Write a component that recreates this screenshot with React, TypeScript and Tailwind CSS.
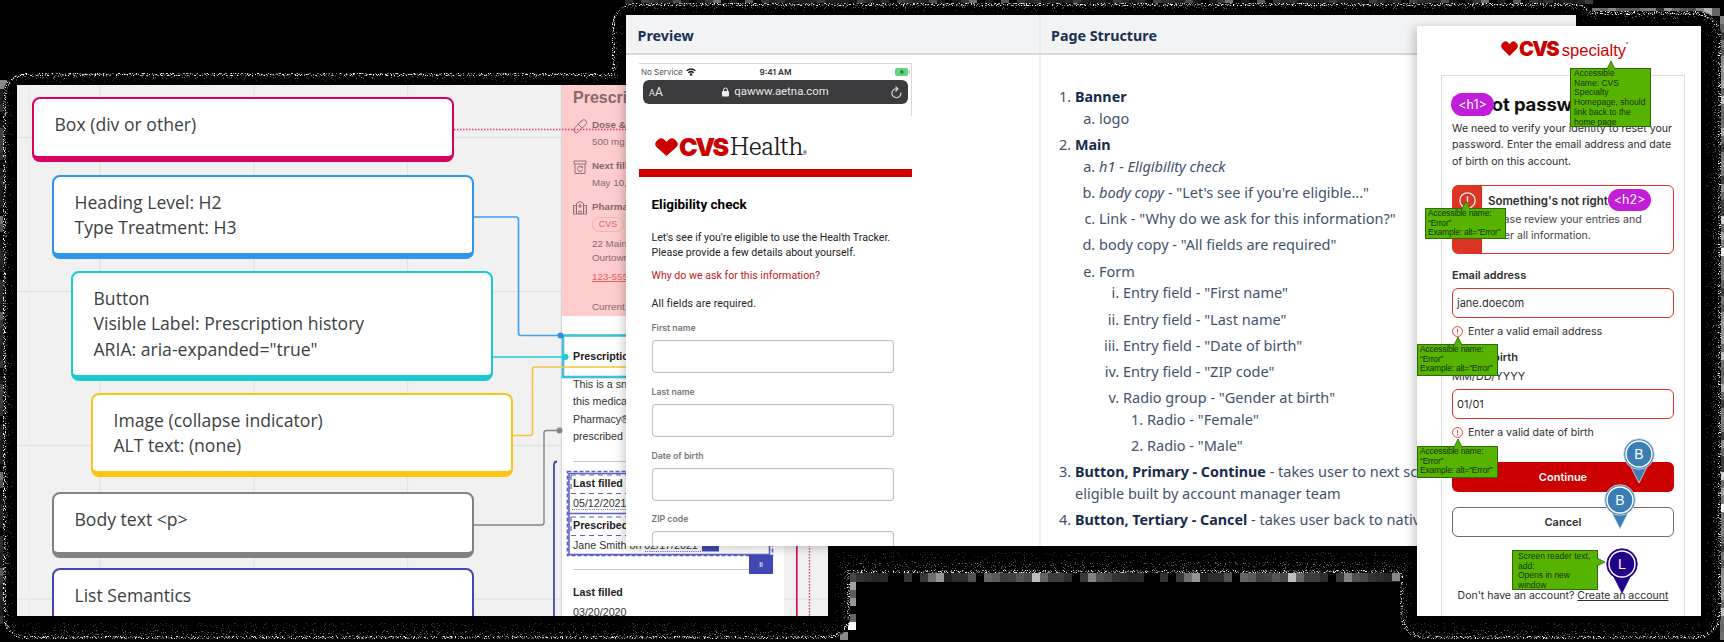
import React from "react";

type Tile = { x: number; y: number; w: number; h: number; v: number };

const pattern = [70, 50, 45, 38, 40, 0, 0, 50, 0, 55, 110, 150, 30, 45, 45, 80, 0, 100, 90, 60, 65, 85, 70, 190, 100, 60, 60, 45, 0, 55, 130, 80];

const tiles: Tile[] = [];
for (let i = 0; i < 69; i++) tiles.push({ x: 848 + i * 8, y: 573, w: 8, h: 9, v: pattern[i % 32] });
for (let i = 0; i < 121; i++) tiles.push({ x: 625 + i * 8, y: 0, w: 8, h: 4, v: pattern[(i * 5) % 32] * 0.6 });
for (let i = 0; i < 69; i++) tiles.push({ x: 0, y: 80 + i * 8, w: 3, h: 8, v: pattern[(i * 7) % 32] * 0.6 });
for (let i = 0; i < 78; i++) tiles.push({ x: 1720, y: 16 + i * 8, w: 4, h: 8, v: 60 + pattern[(i * 3) % 32] });
for (let i = 0; i < 16; i++) tiles.push({ x: 1592 + i * 8, y: 8, w: 8, h: 8, v: 50 + pattern[(i * 9) % 32] });
[160, 95, 150, 0, 100, 255].forEach((v, i) => tiles.push({ x: 848, y: 582 + i * 8, w: 8, h: 8, v }));
tiles.push({ x: 0, y: 80, w: 7, h: 9, v: 136 }, { x: 1392, y: 573, w: 8, h: 8, v: 136 }, { x: 840, y: 632, w: 8, h: 8, v: 140 });

function Backdrop() {
  return (
    <svg className="absolute inset-0" width="1724" height="642" aria-hidden="true">
      <defs>
        <filter id="grain" x="0" y="0" width="1724" height="642" filterUnits="userSpaceOnUse" colorInterpolationFilters="sRGB">
          <feTurbulence type="fractalNoise" baseFrequency="0.9" numOctaves="2" seed="7" result="n" />
          <feColorMatrix in="n" type="matrix" values="2.4 0 0 0 -0.7  2.4 0 0 0 -0.7  2.4 0 0 0 -0.7  0 0 0 0 1" result="g" />
          <feComposite in="g" in2="SourceGraphic" operator="arithmetic" k1="0" k2="2.2" k3="2.4" k4="-2.45" />
          <feColorMatrix type="matrix" values="1 0 0 0 0  0 1 0 0 0  0 0 1 0 0  0 0 0 0 1" />
        </filter>
        <clipPath id="outer">
          <rect x="3" y="73" width="847" height="566" rx="22" />
          <rect x="612" y="3" width="983" height="570" rx="22" />
          <rect x="1400" y="11" width="321" height="628" rx="24" />
        </clipPath>
      </defs>
      <rect width="1724" height="642" fill="#000" />
      {tiles.map((t, i) => (
        <rect key={i} x={t.x} y={t.y} width={t.w} height={t.h} fill={`rgb(${t.v},${t.v},${t.v})`} />
      ))}
      <g clipPath="url(#outer)">
        <g filter="url(#grain)">
          <rect width="1724" height="642" fill="#000" />
          <rect x="3" y="73" width="847" height="566" rx="22" fill="#8c8c8c" />
          <rect x="612" y="3" width="983" height="570" rx="20" fill="#8c8c8c" />
          <rect x="1400" y="11" width="321" height="628" rx="24" fill="#8c8c8c" />
          <rect x="6" y="76" width="841" height="560" rx="20" fill="#444" />
          <rect x="615" y="6" width="977" height="564" rx="18" fill="#444" />
          <rect x="1403" y="15" width="315" height="621" rx="22" fill="#444" />
          <rect x="9" y="79" width="835" height="551" rx="14" fill="#303030" />
          <rect x="618" y="9" width="969" height="553" rx="12" fill="#303030" />
          <rect x="1407" y="19" width="306" height="611" rx="14" fill="#303030" />
          <rect x="13" y="82" width="822" height="541" rx="6" fill="#101010" />
          <rect x="622" y="12" width="960" height="540" rx="6" fill="#101010" />
          <rect x="1412" y="23" width="294" height="600" rx="6" fill="#101010" />
        </g>
      </g>
    </svg>
  );
}

const cards = [
  { cls: "ml-[15px] mt-[12px] h-[65px] border-[#d9005f]", lines: ["Box (div or other)"] },
  { cls: "ml-[35px] mt-[13px] h-[84px] border-[#2f96ea]", lines: ["Heading Level: H2", "Type Treatment: H3"] },
  { cls: "ml-[54px] mt-[12px] h-[110px] border-[#18cbd2]", lines: ["Button", "Visible Label: Prescription history", "ARIA: aria-expanded=\"true\""] },
  { cls: "ml-[74px] mt-[12px] h-[84px] border-[#f8c512]", lines: ["Image (collapse indicator)", "ALT text: (none)"] },
  { cls: "ml-[35px] mt-[15px] h-[66px] border-[#828282]", lines: ["Body text <p>"] },
  { cls: "ml-[35px] mt-[10px] h-[66px] border-[#4148b5]", lines: ["List Semantics"] },
];

function PrescriptionPanel() {
  return (
    <div className="absolute left-[545px] top-0 h-[531px] w-[222px] overflow-hidden whitespace-nowrap bg-white font-['Liberation_Sans',sans-serif] shadow-[-1px_0_1px_#d6d6d6]">
      <div className="h-[231px] bg-[#ffcdcd] pl-[11px] text-[9.8px] leading-[14px] text-[#85696b]">
        <div className="pt-[3px] text-[16px] font-bold leading-[20px]">Prescription details</div>
        <div className="mt-[10px] flex gap-[5px]">
          <svg width="14" height="16" viewBox="0 0 14 16" fill="none" stroke="currentColor" strokeWidth="0.9">
            <rect x="-1" y="5.5" width="16" height="5.5" rx="2.75" transform="rotate(-45 7 8)" />
            <path d="M5 6 l4 4 M7 4.5 l2-2" />
          </svg>
          <div>
            <div className="font-bold">Dose &amp; quantity</div>
            <div className="mt-[3px]">500 mg tablets</div>
          </div>
        </div>
        <div className="mt-[10px] flex gap-[5px]">
          <svg width="14" height="16" viewBox="0 0 14 16" fill="none" stroke="currentColor" strokeWidth="0.9">
            <path d="M1 2h12v3H1zM2 5v9.5h10V5M9 8a2.6 2.6 0 1 0 .6 2.5M9.5 6.8V8.500H7.800" />
          </svg>
          <div>
            <div className="font-bold">Next fill date</div>
            <div className="mt-[3px]">May 10, 2021</div>
          </div>
        </div>
        <div className="mt-[10px] flex gap-[5px]">
          <svg width="14" height="16" viewBox="0 0 14 16" fill="none" stroke="currentColor" strokeWidth="0.9">
            <path d="M.5 5.500h3V14H.5zM10.500 5.500h3V14h-3zM3.500 3.500 7 1.500l3.500 2V14h-7zM5.800 14v-3h2.400v3M7 4v4M5 6h4M1.500 8h1M1.500 11h1M11.500 8h1M11.500 11h1" />
          </svg>
          <div>
            <div className="font-bold">Pharmacy</div>
            <div className="mt-[3px] h-[15px] w-[32px] rounded-full border border-[#ecb6b8] text-center text-[9px] leading-[13px] text-[#e8606a]">CVS</div>
            <div className="mt-[5px]">22 Main Street</div>
            <div>Ourtown, RI</div>
            <div className="mt-[5px] text-[#e8606a] underline">123-555-0100</div>
            <div className="mt-[16px]">Current supply</div>
          </div>
        </div>
      </div>
      <div className="pl-[11px] text-[10.7px] leading-[17.5px] text-[#333]">
        <div className="mt-[32px] font-bold text-[#222]">Prescription history</div>
        <div className="mt-[10px]">This is a snapshot of</div>
        <div>this medication at CVS</div>
        <div>Pharmacy® locations</div>
        <div>prescribed for you</div>
        <div className="mt-[15px] w-[190px] border-t border-[#c9c9c9]" />
        <div className="mt-[13px] font-bold text-[#222]">Last filled</div>
        <div className="mt-[3px]">05/12/2021</div>
        <div className="mt-[4px] font-bold text-[#222]">Prescribed by</div>
        <div className="mt-[3px]">Jane Smith on 02/17/2021</div>
        <div className="mt-[14px] w-[190px] border-t border-[#c9c9c9]" />
        <div className="mt-[14px] font-bold text-[#222]">Last filled</div>
        <div className="mt-[3px]">03/20/2020</div>
      </div>
    </div>
  );
}

function CanvasWindow() {
  return (
    <section className="absolute left-[17px] top-[85px] h-[531px] w-[811px] overflow-hidden bg-[#f1f1f1]">
      <svg className="absolute inset-0" width="811" height="531" stroke="#e3e3e3" strokeWidth="1.3">
        <path d="M83 0V531M237 0V531M390.500 0V531M0 52.500H812M0 206.500H812M0 360.500H812M0 514H812" />
        <path d="M12.500 0V531" stroke="#ebebeb" />
      </svg>
      <PrescriptionPanel />
      <div className="relative flex flex-col">
        {cards.map((c) => (
          <div key={c.lines[0]} className={"w-[421.500px] shrink-0 rounded-[8px] border-2 border-b-[6px] bg-white pl-[20.500px] pt-[13px] font-['Open_Sans',sans-serif] text-[17.6px] leading-[25.3px] text-[#3c3f42] " + c.cls}>
            {c.lines.map((l) => (
              <div key={l} className="whitespace-nowrap">{l}</div>
            ))}
          </div>
        ))}
      </div>
      <svg className="absolute inset-0" width="811" height="531" fill="none" viewBox="17 85 811 531">
        <path d="M454 129.500H640" stroke="#e0327f" strokeWidth="1.4" strokeDasharray="1.4 1.600" />
        <path d="M474 217H516Q518.500 217 518.500 219.500V333Q518.500 335.500 521 335.500H561" stroke="#3f9ff0" strokeWidth="1.6" />
        <path d="M493 357H565" stroke="#18cbd2" strokeWidth="1.6" />
        <rect x="563" y="335.500" width="100" height="41.500" stroke="#45bde0" strokeWidth="2.6" />
        <path d="M513 435.500H530Q532.500 435.500 532.500 433V369.500Q532.500 367 535 367H640" stroke="#f3c63c" strokeWidth="1.6" />
        <path d="M474 525H541.500Q544 525 544 522.500V433Q544 430.500 546.500 430.500H559" stroke="#858585" strokeWidth="1.4" />
        <path d="M557 461.500Q554 461.500 554 465V620" stroke="#4148b5" strokeWidth="1.8" />
        <circle cx="560.500" cy="335.500" r="3" fill="#2f8fe6" />
        <circle cx="565.500" cy="357" r="3" fill="#18cbd2" />
        <circle cx="559.500" cy="430.500" r="3" fill="#858585" />
        <g stroke="#5c61c0">
          <rect x="567.500" y="471.500" width="205" height="84" strokeDasharray="4 2" strokeWidth="1.6" />
          <path d="M569 473V554.500H769.500V514M569 473.500H770M569 513.500H770" strokeWidth="1.6" />
          <path d="M571 475H640M571 493.500H640M571 475V493M571 517H640M571 535.500H640M571 517V535" strokeDasharray="5 4" strokeWidth="1.2" />
          <path d="M572 509.500H640M645 551.500H702" strokeDasharray="1 1.200" />
        </g>
        <rect x="702" y="540" width="17" height="11.500" fill="#4148b5" />
        <rect x="749" y="555" width="24" height="19" fill="#4148b5" />
        <path d="M796.800 500V620" stroke="#d9005f" strokeWidth="1.6" />
        <path d="M809.500 500V620" stroke="#e0327f" strokeWidth="1.4" strokeDasharray="1.4 1.600" />
      </svg>
      <span className="absolute left-[732px] top-[470px] flex h-[19px] w-[24px] items-center justify-center font-['Liberation_Sans',sans-serif] text-[8px] text-white">li</span>
    </section>
  );
}

function Heart({ className }: { className: string }) {
  return (
    <svg className={className} viewBox="0 0 23 19" fill="#cc0000" preserveAspectRatio="none">
      <path d="M11.500 19 1.500 9.500Q-1 6.500 1.300 3.600L3.500 1.300Q6.200-.8 8.800 1.300L11.500 4 14.200 1.300Q16.800-.8 19.500 1.300L21.700 3.600Q24 6.500 21.500 9.500Z" />
    </svg>
  );
}

function BrowserShot() {
  return (
    <div className="mt-[8px] ml-[13px] w-[273px] font-['Roboto',sans-serif]">
      <div className="h-[53px] border-r border-t border-[#d9d9d9] pt-[2px]">
        <div className="flex h-[12px] items-center justify-between pl-[2px] pr-[1px] font-['Inter',sans-serif] text-[7.6px] text-[#555]">
          <div className="flex w-[80px] items-center gap-[3px]">
            <span className="text-[8px]">No Service</span>
            <svg width="10" height="8" viewBox="0 0 10 8" fill="none" stroke="#222" strokeWidth="1.5">
              <path d="M.6 2.800Q5-.9 9.400 2.800M2.300 4.800Q5 2.500 7.700 4.800" />
              <circle cx="5" cy="6.500" r=".6" />
            </svg>
          </div>
          <span className="text-[8.200px] font-semibold text-[#333]">9:41 AM</span>
          <div className="flex w-[80px] justify-end">
            <svg width="15" height="8" viewBox="0 0 15 8">
              <rect width="13" height="8" rx="2" fill="#62d67c" />
              <rect x="13.500" y="2.500" width="1.300" height="3" fill="#9c9" />
              <path d="M7.500 1 4.800 4.500H7L6 7l3-3.500H6.800z" fill="#174d25" />
            </svg>
          </div>
        </div>
        <div className="ml-[4px] mt-[2px] flex h-[24px] w-[265px] items-center justify-between rounded-[6px] bg-[#3b3a3d] px-[6px] text-[#e8e8e8]">
          <span className="w-[30px] text-[9px]">A<span className="text-[12px]">A</span></span>
          <span className="flex items-center gap-[5px] text-[11.400px]">
            <svg width="7" height="10" viewBox="0 0 7 10"><rect y="4" width="7" height="5.500" rx="1" fill="#eee" /><path d="M1.500 4.500V3a2 2 0 0 1 4 0v1.500" fill="none" stroke="#eee" /></svg>
            qawww.aetna.com
          </span>
          <span className="flex w-[30px] justify-end">
            <svg width="11" height="13" viewBox="0 0 11 13" fill="none" stroke="#ddd" strokeWidth="1.100"><path d="M9.800 6.500A4.500 4.500 0 1 1 6 2.800M4.500.5 7 2.900 4.500 5.500" /></svg>
          </span>
        </div>
      </div>
      <div className="flex h-[53px] items-center pl-[16px] pt-[9px]">
        <Heart className="h-[18px] w-[23px]" />
        <span className="ml-[1px] font-['Inter',sans-serif] text-[25px] font-black leading-none tracking-[-2.500px] text-[#cc0000]">CVS</span>
        <span className="ml-[3px] font-['Roboto_Slab','Roboto_Serif','DejaVu_Serif',serif] text-[24px] font-light leading-none tracking-[-0.500px] text-[#1c1c1c]">Health</span>
        <span className="mt-[14px] text-[5px]">®</span>
      </div>
      <div className="h-[8px] bg-[#cc0000]" />
      <div className="pl-[12.500px]">
        <div className="mt-[18px] text-[13.500px] font-bold leading-[18px] text-black">Eligibility check</div>
        <div className="mt-[17px] whitespace-nowrap text-[10.600px] leading-[15px] text-[#222]">Let's see if you're eligible to use the Health Tracker.<br />Please provide a few details about yourself.</div>
        <div className="mt-[8px] text-[10.600px] leading-[15px] text-[#c41620]">Why do we ask for this information?</div>
        <div className="mt-[13px] text-[10.600px] leading-[15px] tracking-[0.100px] text-[#222]">All fields are required.</div>
        {["First name", "Last name", "Date of birth", "ZIP code"].map((l) => (
          <div key={l} className="h-[63.800px] pt-[11px]">
            <div className="font-['Inter',sans-serif] text-[8.700px] font-semibold leading-[13px] text-[#777]">{l}</div>
            <div className="mt-[5px] h-[33px] w-[242px] rounded-[3px] border border-[#c2c2c2] shadow-[inset_0_0_1px_#bbb]" />
          </div>
        ))}
      </div>
    </div>
  );
}

function Outline() {
  const li = "mt-[4.200px] first:mt-0 pl-0";
  return (
    <ol className="list-decimal pl-[34px] pt-[31px] text-[14.500px] leading-[21.930px] text-[#42526e] [&_b]:text-[14.300px] [&_b]:font-bold [&_b]:text-[#172b4d] [&_ol]:pl-[24px]">
      <li className={li}><b>Banner</b>
        <ol className="list-[lower-alpha]"><li className={li}>logo</li></ol>
      </li>
      <li className={li}><b>Main</b>
        <ol className="list-[lower-alpha]">
          <li className={li}><i>h1 - Eligibility check</i></li>
          <li className={li}><i>body copy</i> - "Let's see if you're eligible..."</li>
          <li className={li}>Link - "Why do we ask for this information?"</li>
          <li className={li}>body copy - "All fields are required"</li>
          <li className={li}>Form
            <ol className="list-[lower-roman]">
              <li className={li}>Entry field - "First name"</li>
              <li className={li}>Entry field - "Last name"</li>
              <li className={li}>Entry field - "Date of birth"</li>
              <li className={li}>Entry field - "ZIP code"</li>
              <li className={li}>Radio group - "Gender at birth"
                <ol className="list-decimal">
                  <li className={li}>Radio - "Female"</li>
                  <li className={li}>Radio - "Male"</li>
                </ol>
              </li>
            </ol>
          </li>
        </ol>
      </li>
      <li className={li}><b>Button, Primary - Continue</b> - takes user to next screen if<br />eligible built by account manager team</li>
      <li className={li}><b>Button, Tertiary - Cancel</b> - takes user back to native app</li>
    </ol>
  );
}

function DocumentWindow() {
  return (
    <section className="absolute left-[626px] top-[15px] flex h-[531px] w-[950px] flex-col overflow-hidden bg-white font-['Noto_Sans',sans-serif] shadow-[-2px_2px_10px_rgba(0,0,0,0.22)]">
      <div className="flex h-[40px] shrink-0 border-b-2 border-[#d3d6da] bg-[#f1f3f5] text-[14.300px] font-bold leading-[41px] text-[#1c2f52]">
        <div className="w-[415px] border-r-2 border-[#e9ebed] pl-[11.500px]">Preview</div>
        <div className="pl-[10px]">Page Structure</div>
      </div>
      <div className="flex min-h-0 flex-1 whitespace-nowrap">
        <div className="w-[415px] shrink-0 overflow-hidden border-r-2 border-[#efefef]"><BrowserShot /></div>
        <Outline />
      </div>
    </section>
  );
}

function ErrorIcon({ size, className }: { size: number; className: string }) {
  return (
    <svg width={size} height={size} viewBox="0 0 16 16" fill="none" stroke="currentColor" strokeWidth="1.300" className={className}>
      <circle cx="8" cy="8" r="7.200" />
      <path d="M8 4V9.300M8 10.800V12.200" />
    </svg>
  );
}

function Note({ lines, className, side = "top" }: { lines: string[]; className: string; side?: "top" | "right" }) {
  return (
    <div className={"absolute border border-[#2c6a0c] bg-[#56b300] whitespace-nowrap font-['Liberation_Sans',sans-serif] text-[8.500px] leading-[9.700px] text-[#17330a] " + className}>
      {side === "top" ? (
        <svg className="absolute left-[35px] top-[-9px]" width="10" height="10"><path d="M.8 9.500 5 1 9.200 9.500" fill="#56b300" stroke="#2c6a0c" strokeWidth=".8" /></svg>
      ) : (
        <svg className="absolute right-[-9px] top-[6px]" width="10" height="10"><path d="M.5 .8 9 5 .5 9.200" fill="#56b300" stroke="#2c6a0c" strokeWidth=".8" /></svg>
      )}
      {lines.map((l) => <div key={l}>{l}</div>)}
    </div>
  );
}

function Pin({ letter, className, fill, rim }: { letter: string; className: string; fill: string; rim: string }) {
  return (
    <div className={"absolute h-[45px] w-[32px] text-center font-['Liberation_Sans',sans-serif] text-[14px] leading-[33px] text-white " + className}>
      <svg className="absolute inset-0" width="32" height="45" viewBox="0 0 32 45">
        <path d="M7 27 16 45 25 27z" fill={fill} stroke={rim} strokeWidth=".8" />
        <circle cx="16" cy="16" r="15.300" fill={fill} stroke={rim} strokeWidth=".8" />
        <circle cx="16" cy="16" r="13" fill="none" stroke="#fff" strokeWidth="1.400" />
      </svg>
      <span className="relative">{letter}</span>
    </div>
  );
}

const errorNote = ["Accessible name:", "“Error”", "Example: alt=“Error”"];

function FormWindow() {
  return (
    <section className="absolute left-[1417px] top-[26px] h-[590px] w-[284px] bg-white font-['Inter',sans-serif] text-[11px] text-[#2e2e2e] shadow-[-3px_2px_10px_rgba(0,0,0,0.22)]">
      <div className="flex h-[49px] items-center pl-[84px] text-[#cc0000]">
        <Heart className="mt-[-4px] h-[15px] w-[17px]" />
        <span className="ml-[1px] mt-[-3px] text-[20px] font-black leading-none tracking-[-1.800px]">CVS</span>
        <span className="ml-[4px] mt-[-1px] font-['Liberation_Sans',sans-serif] text-[16.500px] leading-none">specialty</span>
        <span className="mb-[12px] text-[5px]">°</span>
      </div>
      <div className="ml-[24px] h-[541px] w-[244px] whitespace-nowrap border border-b-0 border-[#dedede] px-[10px]">
        <h1 className="mt-[16px] text-[18.500px] font-bold leading-[24px] tracking-[-0.150px] text-[#111]">Forgot password?</h1>
        <p className="mt-[5px] text-[10.600px] leading-[16.300px]">We need to verify your identity to reset your<br />password. Enter the email address and date<br />of birth on this account.</p>
        <div className="mt-[15px] flex h-[69px] w-[222px] rounded-[6px] border border-[#dc3524]">
          <div className="w-[29px] shrink-0 rounded-l-[4px] bg-[#dc3524] pl-[6px] pt-[6px] text-white"><ErrorIcon size={17} className="opacity-90" /></div>
          <div className="pl-[6px] pt-[7px]">
            <div className="text-[11.500px] font-semibold leading-[17px]">Something's not right</div>
            <div className="mt-[2px] text-[10.600px] leading-[16.300px] text-[#444]">Please review your entries and<br />enter all information.</div>
          </div>
        </div>
        <div className="mt-[13px] text-[11px] font-semibold leading-[16px]">Email address</div>
        <div className="mt-[5px] h-[30px] w-[222px] rounded-[6px] border border-[#dc3524] pl-[4px] text-[11px] leading-[29px]">jane.doecom</div>
        <div className="mt-[6px] flex h-[16px] items-center gap-[5px] text-[10.600px]"><ErrorIcon size={11} className="text-[#dc3524]" />Enter a valid email address</div>
        <div className="mt-[9px] text-[11px] font-semibold leading-[16px]">Date of birth</div>
        <div className="mt-[3px] text-[11px] leading-[16px]">MM/DD/YYYY</div>
        <div className="mt-[5px] h-[30px] w-[222px] rounded-[6px] border border-[#dc3524] pl-[4px] text-[11px] leading-[29px]">01/01</div>
        <div className="mt-[6px] flex h-[16px] items-center gap-[5px] text-[10.600px]"><ErrorIcon size={11} className="text-[#dc3524]" />Enter a valid date of birth</div>
        <div className="mt-[21px] h-[30px] w-[222px] rounded-[6px] bg-[#cc0000] text-center text-[11px] font-semibold leading-[30px] text-white">Continue</div>
        <div className="mt-[15px] h-[30px] w-[222px] rounded-[6px] border border-[#6b6b6b] text-center text-[11px] font-semibold leading-[29px]">Cancel</div>
        <div className="mt-[51px] w-[222px] text-center text-[10.500px] leading-[16px]">Don't have an account? <span className="underline">Create an account</span></div>
      </div>

      <span className="absolute left-[34px] top-[67px] h-[23px] w-[43px] rounded-full bg-[#c31ddc] text-center text-[12.500px] leading-[23px] text-white">&lt;h1&gt;</span>
      <span className="absolute left-[191px] top-[163px] h-[22px] w-[43px] rounded-full bg-[#c31ddc] text-center text-[12.500px] leading-[22px] text-white">&lt;h2&gt;</span>
      <Note className="left-[153px] top-[42px] h-[59px] w-[81px] pl-[3px]" lines={["Accessible", "Name: CVS", "Specialty", "Homepage, should", "link back to the", "home page"]} />
      <Note className="left-[8px] top-[182px] h-[31px] w-[81px] pl-[2px] tracking-[-0.200px]" lines={errorNote} />
      <Note className="left-0 top-[318px] h-[32px] w-[81px] pl-[2px] tracking-[-0.200px]" lines={errorNote} />
      <Note className="left-0 top-[420px] h-[32px] w-[81px] pl-[2px] tracking-[-0.200px]" lines={errorNote} />
      <Note className="left-[95px] top-[524px] h-[40px] w-[86px] pl-[5px] pt-[1px]" side="right" lines={["Screen reader text,", "add:", "Opens in new", "window"]} />
      <Pin letter="B" className="left-[206px] top-[412px]" fill="#3c7db3" rim="#d5e3ee" />
      <Pin letter="B" className="left-[187px] top-[458px]" fill="#3c7db3" rim="#d5e3ee" />
      <Pin letter="L" className="left-[189px] top-[522px]" fill="#22008a" rim="#22008a" />
    </section>
  );
}

export default function App() {
  return (
    <main className="relative h-[642px] w-[1724px] overflow-hidden bg-black">
      <Backdrop />
      <CanvasWindow />
      <DocumentWindow />
      <FormWindow />
    </main>
  );
}
